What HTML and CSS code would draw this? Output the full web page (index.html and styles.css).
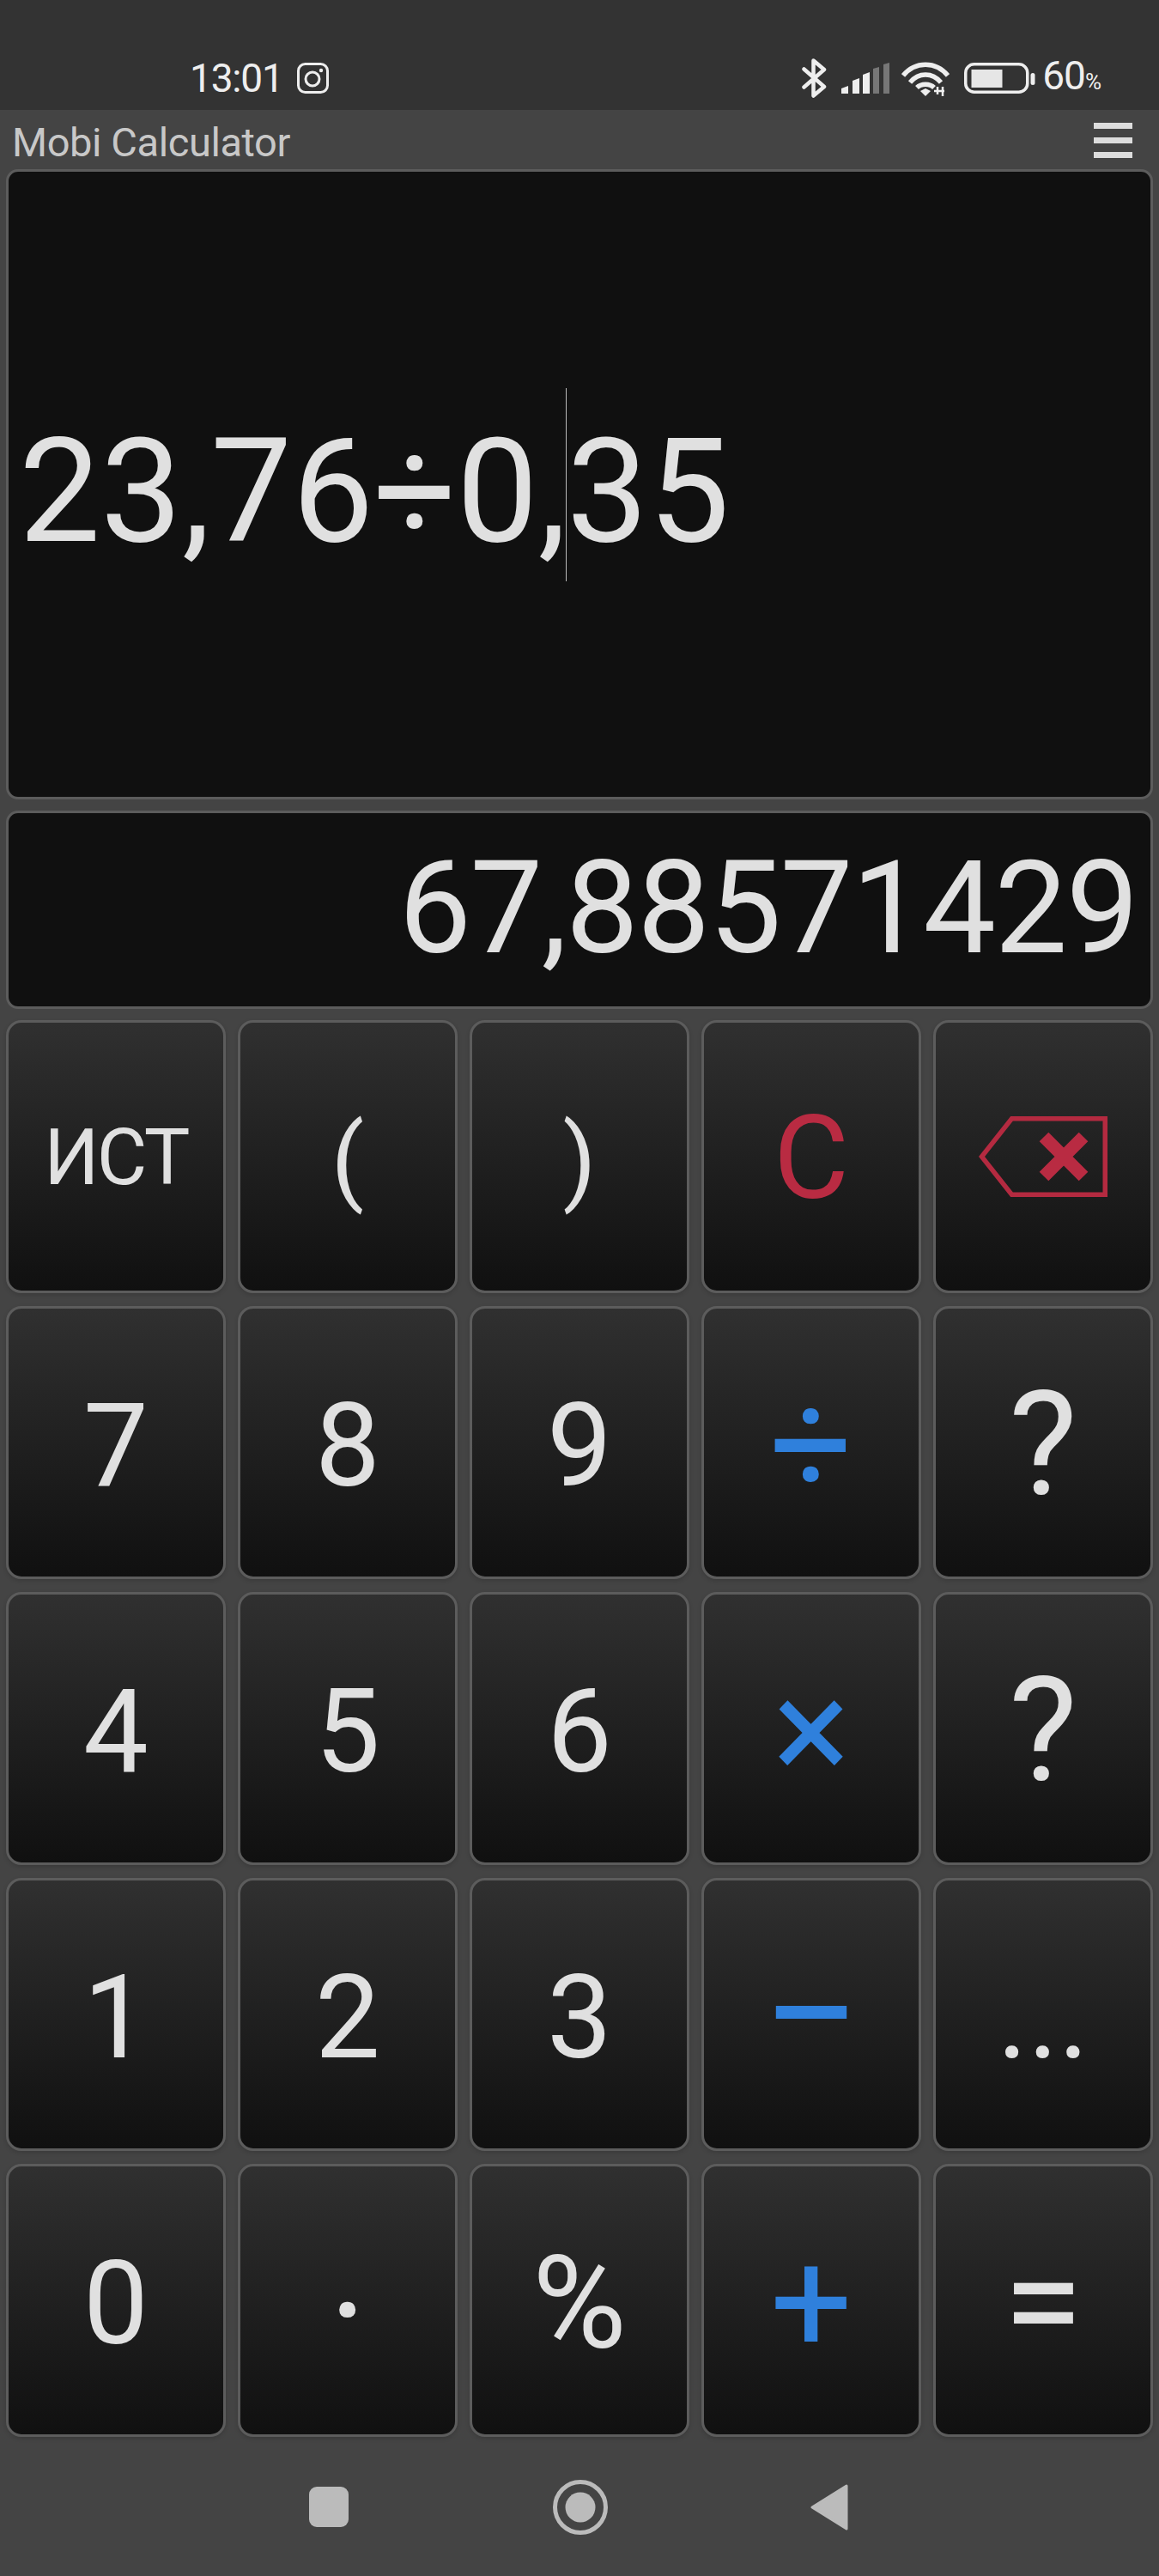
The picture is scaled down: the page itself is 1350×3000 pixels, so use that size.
FILE: index.html
```html
<!DOCTYPE html>
<html lang="ru">
<head>
<meta charset="utf-8">
<title>Mobi Calculator</title>
<link rel="stylesheet" href="styles.css">
</head>
<body>
<div class="status">
  <span class="time">13:01</span>
  <svg class="ig" width="37" height="36" viewBox="0 0 37 36"><rect x="1.5" y="1.5" width="34" height="33" rx="8" fill="none" stroke="#eee" stroke-width="3"/><circle cx="18" cy="19" r="8" fill="none" stroke="#eee" stroke-width="3"/><circle cx="28" cy="9" r="2.2" fill="#eee"/></svg>
  <div class="status-right">
    <svg class="bt" width="30" height="46" viewBox="0 0 30 46"><path d="M2.5 12.5 L26 33 L13.5 43.5 V2.5 L26 13 L2.5 33.5" fill="none" stroke="#eee" stroke-width="4.5" stroke-linejoin="round" stroke-linecap="round"/></svg>
    <svg class="sig" width="57" height="36" viewBox="0 0 57 36"><path d="M0 30 L8 27 V36 H0Z M13 21 L21 18 V36 H13Z" fill="#eee"/><path d="M25 14 L33 11 V36 H25Z" fill="#eee"/><path d="M37 7 L44 5 V36 H37Z M49 2 L56 0 V36 H49Z" fill="#777"/></svg>
    <svg class="wifi" width="56" height="41" viewBox="0 0 56 41"><g fill="none" stroke="#eee" stroke-width="5.5"><path d="M2 17 C16 0 40 0 54 17"/><path d="M10 25 C20 13 36 13 46 25"/><path d="M18 31 C23 26 33 26 38 31"/></g><path d="M22 35 L28 32 L34 35 L28 41Z" fill="#eee"/><path d="M38 35 H50 M42 30 V39 M48 30 V41" stroke="#eee" stroke-width="2.5"/></svg>
    <svg class="batt" width="83" height="36" viewBox="0 0 83 36"><rect x="1.75" y="1.75" width="72" height="32.5" rx="10" fill="none" stroke="#eee" stroke-width="3.5"/><rect x="8.5" y="8" width="36" height="21" fill="#e6e6e6"/><rect x="77.5" y="12" width="5" height="14" rx="2.5" fill="#eee"/></svg>
    <span class="pct">60<span class="pct-sign">%</span></span>
  </div>
</div>
<div class="toolbar">
  <span class="title">Mobi Calculator</span>
  <div class="burger"><i></i><i></i><i></i></div>
</div>
<div class="screen expr"><span class="expr-text">23,76÷0,<span class="caret"></span>35</span></div>
<div class="screen result"><span class="result-text">67,88571429</span></div>
<div class="keys">
  <div class="key k-word">ИСТ</div>
  <div class="key k-paren">(</div>
  <div class="key k-paren">)</div>
  <div class="key k-red">C</div>
  <div class="key k-icon"><svg width="150" height="94" viewBox="0 0 150 94"><path d="M3.5 47 L38.5 2.75 H147.25 V91.25 H38.5Z" fill="none" stroke="#b42a40" stroke-width="5.5"/><path d="M76 24 L122 70 M122 24 L76 70" stroke="#b92b42" stroke-width="15"/></svg></div>
  <div class="key">7</div>
  <div class="key">8</div>
  <div class="key">9</div>
  <div class="key k-big k-blue">÷</div>
  <div class="key k-big">?</div>
  <div class="key">4</div>
  <div class="key">5</div>
  <div class="key">6</div>
  <div class="key k-big k-blue">×</div>
  <div class="key k-big">?</div>
  <div class="key">1</div>
  <div class="key">2</div>
  <div class="key">3</div>
  <div class="key k-minus k-blue">−</div>
  <div class="key">...</div>
  <div class="key">0</div>
  <div class="key k-dot">·</div>
  <div class="key k-pct">%</div>
  <div class="key k-big k-blue">+</div>
  <div class="key k-big">=</div>
</div>
<div class="nav">
  <span class="nav-square"></span>
  <svg width="64" height="64" viewBox="0 0 64 64"><circle cx="32" cy="32" r="29.5" fill="none" stroke="#bbb" stroke-width="5"/><circle cx="32" cy="32" r="17.5" fill="#bbb"/></svg>
  <svg class="nav-back" width="44" height="54" viewBox="0 0 44 54"><path d="M42 2 V52 L2 27Z" fill="#bbb" stroke="#bbb" stroke-width="3" stroke-linejoin="round"/></svg>
</div>
</body>
</html>
```
FILE: styles.css
```css
* { box-sizing: border-box; }
html, body { margin: 0; padding: 0; }
body {
  width: 1350px;
  height: 3000px;
  overflow: hidden;
  background: #444;
  font-family: Roboto, "Noto Sans", sans-serif;
  color: #e0e0e0;
}
.status {
  height: 128px;
  background: #333;
  display: flex;
  align-items: center;
  padding: 55px 67px 1px 221px;
  color: #eee;
}
.time { font-size: 46px; line-height: 52px; letter-spacing: -1.2px; }
.ig { margin-left: 16px; }
.status-right { margin-left: auto; display: flex; align-items: center; }
.sig { margin-left: 16px; }
.wifi { margin-left: 13px; }
.batt { margin-left: 17px; }
.pct { margin-left: 8px; font-size: 46px; line-height: 52px; letter-spacing: -1px; }
.pct-sign { font-size: 26px; letter-spacing: 0; }
.toolbar {
  height: 69px;
  display: flex;
  align-items: center;
  justify-content: space-between;
  padding: 0 31px 0 14px;
}
.title { font-size: 47px; color: #c8c8c8; letter-spacing: -0.4px; margin-top: 6px; }
.burger { display: flex; flex-direction: column; gap: 10px; width: 45px; margin-top: 2px; }
.burger i { display: block; height: 7px; background: #ddd; }
.screen {
  margin: 0 7px;
  background: #101010;
  border: 3px solid #5c5c5c;
  border-radius: 14px;
  display: flex;
  align-items: center;
}
.expr { height: 734px; padding: 16px 0 0 12px; margin-bottom: 13px; }
.expr-text { font-size: 169px; line-height: 200px; white-space: nowrap; }
.caret { position: relative; display: inline-block; width: 0; height: 0; }
.caret::after {
  content: "";
  position: absolute;
  left: -1px;
  bottom: -47px;
  width: 1px;
  height: 225px;
  background: #bbb;
}
.result { height: 231px; justify-content: flex-end; padding: 0 15px 4px 0; margin-bottom: 13px; }
.result-text { font-size: 151px; line-height: 180px; letter-spacing: -1.6px; white-space: nowrap; }
.keys {
  margin: 0 7px;
  display: grid;
  grid-template-columns: repeat(5, 256px);
  grid-auto-rows: 318px;
  column-gap: 14px;
  row-gap: 15px;
}
.key {
  background: linear-gradient(#303030, #101010);
  border: 3px solid #5c5c5c;
  border-radius: 18px;
  box-shadow: 0 2px 5px rgba(0, 0, 0, .15);
  display: flex;
  align-items: center;
  justify-content: center;
  padding-top: 8px;
  font-size: 135px;
  color: #e0e0e0;
}
.k-icon { padding-top: 0; }
.k-word { font-size: 90px; letter-spacing: -2.5px; padding-top: 2px; }
.k-paren { font-size: 112px; padding-top: 6px; }
.k-red { color: #b92b42; padding-top: 4px; }
.k-blue { color: #2f80dc; }
.k-big { font-size: 169px; padding-top: 4px; }
.k-minus { font-size: 202px; padding-top: 0; }
.k-dot { font-size: 169px; padding-top: 26px; }
.k-pct { font-size: 150px; padding-top: 6px; }
.nav {
  height: 163px;
  display: flex;
  align-items: center;
  justify-content: center;
  gap: 238px;
}
.nav-square { display: block; width: 46px; height: 47px; border-radius: 9px; background: #bbb; }
.nav-back { margin-left: -2px; margin-right: 2px; }
```
